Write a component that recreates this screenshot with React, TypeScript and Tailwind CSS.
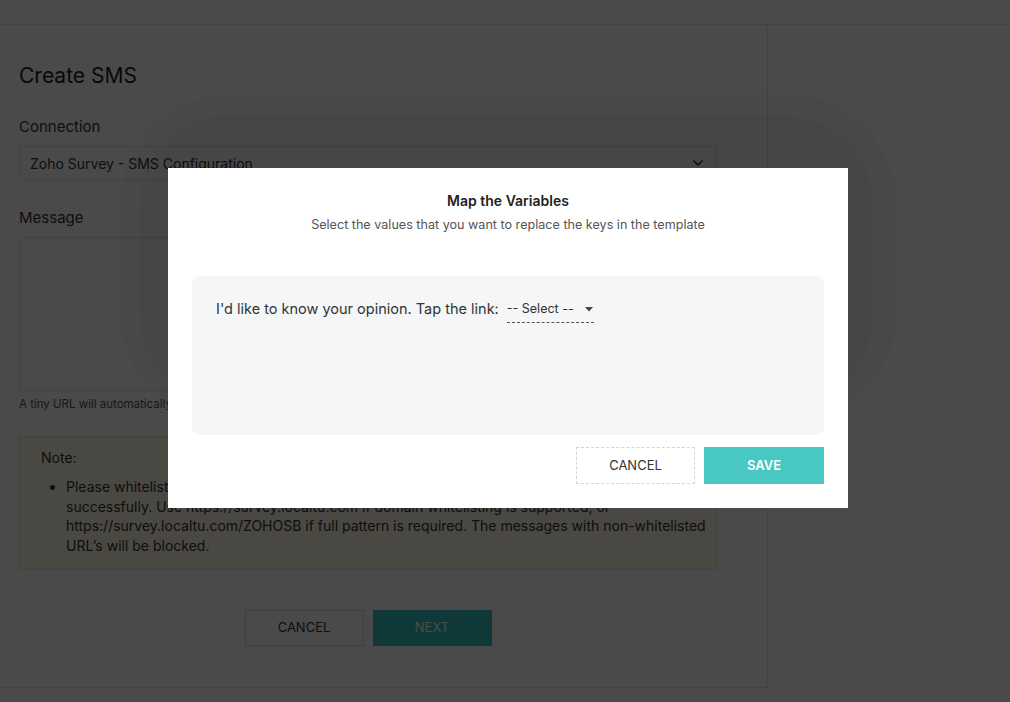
import { ChevronDown } from 'lucide-react';

export default function App() {
  return (
    <div className="relative w-[1010px] h-[702px] overflow-hidden bg-white font-['Inter',sans-serif] text-[#333]">
      {/* Page behind the dialog */}
      <div className="h-[25px] border-b border-[#e6e6e6]" />
      <div className="w-[768px] h-[663px] border-r border-b border-[#e6e6e6] px-[19px] flex flex-col">
        <h1 className="mt-[39px] text-[21px] leading-[24px] text-[#222]">Create SMS</h1>
        <label className="mt-[30px] text-[15px] leading-[18px] text-[#333]">Connection</label>
        <div className="mt-[10px] w-[698px] h-[34px] border border-[#e2e2e2] rounded-[2px] flex items-center justify-between px-[10px] text-[14px]">
          <span>Zoho Survey - SMS Configuration</span>
          <ChevronDown className="w-4 h-4 text-[#333]" strokeWidth={2.5} />
        </div>
        <label className="mt-[29px] text-[15px] leading-[18px]">Message</label>
        <div className="mt-[10px] w-[698px] h-[154px] border border-[#e2e2e2] rounded-[3px]" />
        <p className="mt-[6px] text-[11.5px] leading-[14px] text-[#555]">
          A tiny URL will automatically be generated and inserted in place of the survey link.
        </p>
        <div className="mt-[25px] w-[698px] h-[134px] bg-[#fdf8e6] border border-[#ece2bc] pl-[21px] pt-[11px]">
          <p className="text-[14px] leading-[19px] text-[#333]">Note:</p>
          <ul className="mt-[10px] list-disc pl-[25px] text-[14px] leading-[19.5px] text-[#333]">
            <li>
              Please whitelist the following URLs with your SMS provider to ensure the messages are delivered
              <br />
              successfully. Use https://survey.localtu.com if domain whitelisting is supported, or
              <br />
              https://survey.localtu.com/ZOHOSB if full pattern is required. The messages with non-whitelisted
              <br />
              URL’s will be blocked.
            </li>
          </ul>
        </div>
        <div className="mt-[40px] w-[698px] flex justify-center gap-[9px]">
          <button className="w-[119px] h-[36px] border border-[#d9d9d9] bg-white text-[13px] text-[#333]">CANCEL</button>
          <button className="w-[119px] h-[36px] bg-[#35c3c0] text-[13px] text-white">NEXT</button>
        </div>
      </div>

      {/* Dimming overlay */}
      <div className="absolute inset-0 bg-black/[0.71]" />
      <div className="absolute left-[120px] top-[95px] w-[777px] h-[327px] rounded-[110px] bg-black/[0.02]" />
      <div className="absolute left-[140px] top-[115px] w-[733px] h-[290px] rounded-[90px] bg-black/[0.02]" />

      {/* Dialog */}
      <div className="absolute left-[168px] top-[168px] w-[680px] h-[340px] bg-white px-[24px] pt-[24px] flex flex-col">
        <h2 className="text-center text-[14px] leading-[17px] font-semibold text-[#222]">Map the Variables</h2>
        <p className="mt-[8px] text-center text-[12.6px] leading-[16px] text-[#555]">
          Select the values that you want to replace the keys in the template
        </p>
        <div className="mt-[43px] h-[159px] rounded-[8px] bg-[#f5f6f8] px-[24px] pt-[23px]">
          <div className="flex items-start text-[14.5px] leading-[20px] text-[#333]">
            <span>I'd like to know your opinion. Tap the link:</span>
            <div className="ml-[8px] flex items-center gap-[11px] border-b border-dashed border-[#555] pb-[3px] pr-[1px] text-[12.5px]">
              <span>-- Select --</span>
              <svg width="8" height="5" viewBox="0 0 8 5" className="text-[#444]">
                <path d="M0 0 L8 0 L4 4.5 Z" fill="currentColor" />
              </svg>
            </div>
          </div>
        </div>
        <div className="mt-[12px] flex justify-end gap-[9px]">
          <button className="w-[119px] h-[37px] border border-dashed border-[#d4d4d4] bg-white text-[13px] text-[#333]">CANCEL</button>
          <button className="w-[120px] h-[37px] bg-[#48c7c3] text-[13px] font-semibold text-white">SAVE</button>
        </div>
      </div>
    </div>
  );
}
